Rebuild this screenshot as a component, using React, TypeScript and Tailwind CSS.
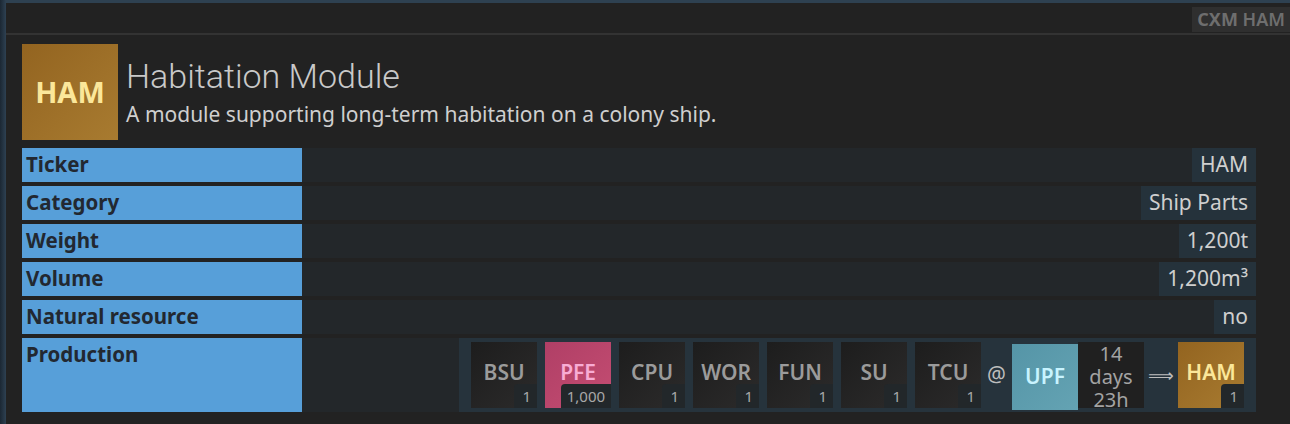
import React from "react";

type Mat = { t: string; n: string; kind?: "dark" | "pink" | "gold" };

const inputs: Mat[] = [
  { t: "BSU", n: "1" },
  { t: "PFE", n: "1,000", kind: "pink" },
  { t: "CPU", n: "1" },
  { t: "WOR", n: "1" },
  { t: "FUN", n: "1" },
  { t: "SU", n: "1" },
  { t: "TCU", n: "1" },
];

function Tile({ m }: { m: Mat }) {
  const bg =
    m.kind === "pink"
      ? "bg-gradient-to-br from-[#b03f66] to-[#c44d72] text-[#f8acd4]"
      : m.kind === "gold"
      ? "bg-gradient-to-br from-[#936420] to-[#a87b30] text-[#fbe79a]"
      : "bg-gradient-to-br from-[#1d1d1d] to-[#2c2b2b] text-[#9b9b9b]";
  return (
    <div className={`relative w-[66px] h-[66px] shrink-0 flex items-center justify-center ${bg}`}>
      <span className="text-[21px] font-semibold leading-none -mt-[5px]">{m.t}</span>
      <span className="absolute right-0 bottom-0 h-[24px] min-w-[23px] px-[6px] rounded-tl-[4px] bg-[#22272a] text-[#a8a8a8] text-[15px] leading-[24px] text-right">
        {m.n}
      </span>
    </div>
  );
}

function Row({ label, value }: { label: string; value: string }) {
  return (
    <>
      <div className="h-[34px] bg-[#579fd9] text-[#222831] font-bold text-[20.5px] leading-[32px] pl-[4px]">{label}</div>
      <div className="h-[34px] bg-[#23272a] flex justify-end">
        <span className="h-full bg-[#25323b] text-[#cfcfcf] text-[21px] leading-[33px] px-[8px]">{value}</span>
      </div>
    </>
  );
}

export default function App() {
  return (
    <div
      className="w-[1290px] h-[424px] bg-[#222222] flex overflow-hidden"
      style={{ fontFamily: '"Noto Sans", "Open Sans", sans-serif' }}
    >
      <div className="w-[6px] h-full bg-gradient-to-r from-[#1b2733] to-[#2e4152] shrink-0" />
      <div className="flex-1 flex flex-col">
        <div className="h-[3px] bg-[#2e4151]" />
        <div className="h-[32px] border-b-2 border-[#333333] flex justify-end items-start pt-[4px]">
          <div className="h-[25px] bg-[#2f2f2f] pl-[5px] pr-[5px] text-[18px] leading-[25px] text-[#6e6e6e]">
            <span className="font-bold">CXM</span> <span className="font-semibold">HAM</span>
          </div>
        </div>
        <div className="pl-[16px] pr-[34px] pt-[9px]">
          <div className="flex">
            <div className="w-[96px] h-[96px] bg-gradient-to-br from-[#936420] to-[#a87b30] flex items-center justify-center">
              <span className="text-[#fbe79a] text-[29px] font-bold">HAM</span>
            </div>
            <div className="pl-[8px] pt-[10px]">
              <div
                className="text-[#c9c9c9] text-[34px] leading-[44px] font-light"
                style={{ fontFamily: "Roboto, sans-serif" }}
              >
                Habitation Module
              </div>
              <div className="text-[#cfcfcf] text-[21px] leading-[30px] mt-[1px]">
                A module supporting long-term habitation on a colony ship.
              </div>
            </div>
          </div>
          <div className="mt-[8px] grid grid-cols-[280px_1fr] gap-y-[4px]">
            <Row label="Ticker" value="HAM" />
            <Row label="Category" value="Ship Parts" />
            <Row label="Weight" value="1,200t" />
            <Row label="Volume" value="1,200m³" />
            <Row label="Natural resource" value="no" />
            <div className="h-[74px] bg-[#579fd9] text-[#222831] font-bold text-[20.5px] leading-[32px] pl-[4px]">
              Production
            </div>
            <div className="h-[74px] bg-[#23272a] flex justify-end">
              <div className="h-full bg-[#26333c] px-[12px] flex items-center">
                <div className="flex gap-[8px]">
                  {inputs.map((m) => (
                    <Tile key={m.t} m={m} />
                  ))}
                </div>
                <span className="text-[#bdbdbd] text-[21px] ml-[6px] mr-[6px]">@</span>
                <div className="flex mt-[4px]">
                  <div className="w-[66px] h-[66px] bg-gradient-to-br from-[#5595a7] to-[#64a3b3] flex items-center justify-center">
                    <span className="text-[#c8f4ff] text-[21px] font-semibold">UPF</span>
                  </div>
                  <div className="w-[66px] h-[66px] bg-[#202020] text-center text-[#a3a3a3] text-[20px] leading-[23px] -mt-[2px]">
                    14
                    <br />
                    days
                    <br />
                    23h
                  </div>
                </div>
                <span
                  className="text-[#bdbdbd] text-[18px] w-[34px] text-center"
                  style={{ fontFamily: '"DejaVu Sans", sans-serif' }}
                >
                  ⟹
                </span>
                <Tile m={{ t: "HAM", n: "1", kind: "gold" }} />
              </div>
            </div>
          </div>
        </div>
      </div>
    </div>
  );
}
